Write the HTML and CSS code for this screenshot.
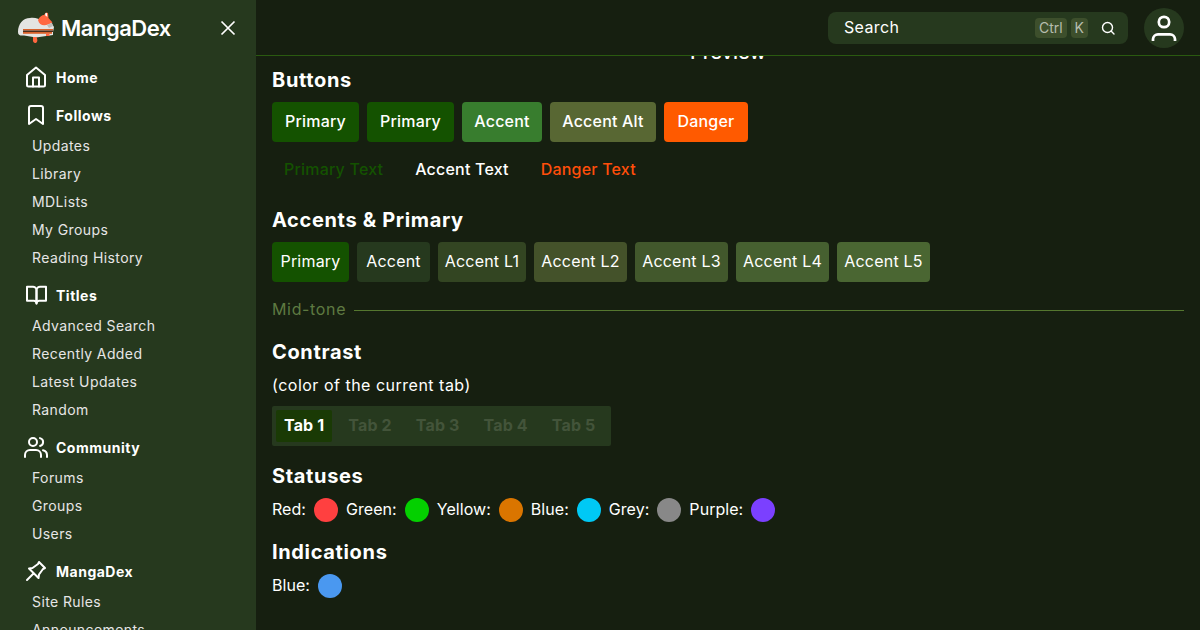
FILE: index.html
```html
<!DOCTYPE html>
<html lang="en">
<head>
<meta charset="utf-8">
<title>MangaDex</title>
<link rel="stylesheet" href="styles.css">
</head>
<body>
<aside class="sidebar">
  <div class="brand">
    <svg class="logo" width="36" height="32" viewBox="0 0 36 32">
      <path d="M0 20 C0 12 5 6 12 6 C17 5 21 7 25 9 L33 10 L36 15 L35 20 L35 23 L18 25.500 L6 23.500 C2 24 0 23 0 20 Z" fill="#e4e4e2"/>
      <path d="M20 8 C21 5 24 3 26 3 L28 0.500 L30 1 L30.500 6 L34.500 10.500 L30 12.500 C25 14.500 21 12.500 20 8 Z" fill="#ff6740"/>
      <path d="M27 1.500 L29 1 L29.300 5 L27.500 3.500 Z" fill="#fff"/>
      <path d="M29 13 L34 11 L35 14 L31 16 Z" fill="#bdbdb8"/>
      <path d="M5 17 H35 V18.500 H5 Z" fill="#d8622c"/>
      <path d="M5 18.500 H35 V20 H5 Z" fill="#4a2c1c"/>
      <path d="M5 20 H34 V21.800 H5 Z" fill="#d8622c"/>
      <path d="M28 21.500 H31.500 V24 H28 Z" fill="#ff6740"/>
      <path d="M15 25 L18.500 25 C19.500 27.500 20 29.500 18 31 C16 31.500 14.500 29.500 15 27.500 Z" fill="#ff6740"/>
    </svg>
    <span class="brand-name">MangaDex</span>
    <svg class="close" width="16" height="16" viewBox="0 0 16 16"><path d="M1.500 1.500 L14.500 14.500 M14.500 1.500 L1.500 14.500" stroke="#fff" stroke-width="1.700" fill="none"/></svg>
  </div>
  <nav class="nav">
    <section class="nav-group">
      <div class="nav-head">
        <svg class="nav-icon" width="24" height="24" viewBox="0 0 24 24" fill="none" stroke="#fff" stroke-width="2" stroke-linejoin="round" stroke-linecap="round"><path d="M3 10 L12 2.500 L21 10 V20 A1.500 1.500 0 0 1 19.500 21.500 H4.500 A1.500 1.500 0 0 1 3 20 Z"/><path d="M9 21.500 V12.500 H15 V21.500"/></svg>
        <span>Home</span>
      </div>
    </section>
    <section class="nav-group">
      <div class="nav-head">
        <svg class="nav-icon" width="24" height="24" viewBox="0 0 24 24" fill="none" stroke="#fff" stroke-width="2" stroke-linejoin="round"><path d="M19 21 L12 16 L5 21 V5 A2 2 0 0 1 7 3 H17 A2 2 0 0 1 19 5 Z"/></svg>
        <span>Follows</span>
      </div>
      <a class="nav-link">Updates</a>
      <a class="nav-link">Library</a>
      <a class="nav-link">MDLists</a>
      <a class="nav-link">My Groups</a>
      <a class="nav-link">Reading History</a>
    </section>
    <section class="nav-group">
      <div class="nav-head">
        <svg class="nav-icon" width="24" height="24" viewBox="0 0 24 24" fill="none" stroke="#fff" stroke-width="2" stroke-linejoin="round"><path d="M3 3.700 H8.500 A3.500 3.500 0 0 1 12.500 7 V20.500 A3 3 0 0 0 10 17.700 H3 Z"/><path d="M22 3.700 H16.500 A3.500 3.500 0 0 0 12.500 7 V20.500 A3 3 0 0 1 15 17.700 H22 Z"/></svg>
        <span>Titles</span>
      </div>
      <a class="nav-link">Advanced Search</a>
      <a class="nav-link">Recently Added</a>
      <a class="nav-link">Latest Updates</a>
      <a class="nav-link">Random</a>
    </section>
    <section class="nav-group">
      <div class="nav-head">
        <svg class="nav-icon" width="24" height="24" viewBox="0 0 24 24" fill="none" stroke="#fff" stroke-width="2" stroke-linecap="round"><path d="M1 22 V20 A5 5 0 0 1 6 15 H12 A5 5 0 0 1 17 20 V22"/><circle cx="9" cy="7" r="4"/><path d="M23 22 V20 A5 5 0 0 0 19 15.200"/><path d="M16 3.100 A4 4 0 0 1 16 10.900"/></svg>
        <span>Community</span>
      </div>
      <a class="nav-link">Forums</a>
      <a class="nav-link">Groups</a>
      <a class="nav-link">Users</a>
    </section>
    <section class="nav-group">
      <div class="nav-head">
        <svg class="nav-icon" width="24" height="24" viewBox="0 0 24 24" fill="none" stroke="#fff" stroke-width="2" stroke-linejoin="round" stroke-linecap="round"><path d="M15 3 L21 9 L19 10 L15 15.500 L14.500 19 L5 9.500 L8.500 9 L14 5 Z"/><path d="M9.500 14.500 L3 21"/></svg>
        <span>MangaDex</span>
      </div>
      <a class="nav-link">Site Rules</a>
      <a class="nav-link">Announcements</a>
    </section>
  </nav>
</aside>

<header class="topbar">
  <div class="search">
    <span class="search-label">Search</span>
    <span class="kbd">Ctrl</span>
    <span class="kbd">K</span>
    <svg class="search-icon" width="16" height="16" viewBox="0 0 16 16" fill="none" stroke="#fff" stroke-width="1.400" stroke-linecap="round"><circle cx="7.500" cy="7.500" r="5"/><path d="M11.300 11.300 L14 14"/></svg>
  </div>
  <div class="avatar">
    <svg width="28" height="30" viewBox="0 0 28 30" fill="none" stroke="#fff" stroke-width="2.700"><circle cx="14" cy="9" r="5.200"/><path d="M3 28 V26 A5 5 0 0 1 8 21.400 H20 A5 5 0 0 1 25 26 V28"/></svg>
  </div>
</header>

<main class="content">
  <div class="clipped-title"><span>Preview</span></div>
  <h2 class="heading">Buttons</h2>
  <div class="row button-row">
    <span class="btn btn-primary">Primary</span>
    <span class="btn btn-primary">Primary</span>
    <span class="btn btn-accent">Accent</span>
    <span class="btn btn-alt">Accent Alt</span>
    <span class="btn btn-danger">Danger</span>
  </div>
  <div class="row row-text">
    <span class="btn text-primary">Primary Text</span>
    <span class="btn text-accent">Accent Text</span>
    <span class="btn text-danger">Danger Text</span>
  </div>
  <h2 class="heading heading-accents">Accents &amp; Primary</h2>
  <div class="row swatches">
    <span class="swatch sw-primary">Primary</span>
    <span class="swatch sw-a0">Accent</span>
    <span class="swatch sw-a1">Accent L1</span>
    <span class="swatch sw-a2">Accent L2</span>
    <span class="swatch sw-a3">Accent L3</span>
    <span class="swatch sw-a4">Accent L4</span>
    <span class="swatch sw-a5">Accent L5</span>
  </div>
  <div class="midtone"><span>Mid-tone</span><i></i></div>
  <h2 class="heading heading-contrast">Contrast</h2>
  <p class="note">(color of the current tab)</p>
  <div class="tabs">
    <span class="tab tab-on">Tab 1</span>
    <span class="tab">Tab 2</span>
    <span class="tab">Tab 3</span>
    <span class="tab">Tab 4</span>
    <span class="tab">Tab 5</span>
  </div>
  <h2 class="heading heading-status">Statuses</h2>
  <div class="dots">
    <span>Red:</span><i class="dot d-red"></i>
    <span>Green:</span><i class="dot d-green"></i>
    <span>Yellow:</span><i class="dot d-yellow"></i>
    <span>Blue:</span><i class="dot d-blue"></i>
    <span>Grey:</span><i class="dot d-grey"></i>
    <span>Purple:</span><i class="dot d-purple"></i>
  </div>
  <h2 class="heading heading-ind">Indications</h2>
  <div class="dots">
    <span>Blue:</span><i class="dot d-ind"></i>
  </div>
</main>
</body>
</html>
```
FILE: styles.css
```css
* { box-sizing: border-box; }
html, body { height: 100%; }
body {
  margin: 0;
  height: 630px;
  overflow: hidden;
  display: grid;
  grid-template-columns: 256px 1fr;
  grid-template-rows: 56px 1fr;
  background: #161f10;
  color: #fff;
  font-family: "Inter", "Noto Sans", sans-serif;
  font-size: 16px;
}
.sidebar {
  grid-row: 1 / 3;
  background: #26391e;
  overflow: hidden;
  height: 630px;
}
.brand {
  display: flex;
  align-items: center;
  height: 56px;
  padding-left: 18px;
  padding-right: 20px;
}
.logo { flex: none; }
.brand-name {
  margin-left: 7px;
  font-size: 22px;
  font-weight: 600;
  letter-spacing: -0.5px;
  flex: 1;
}
.nav { padding: 7px 24px 0; }
.nav-group { margin-bottom: 10px; }
.nav-head {
  display: flex;
  align-items: center;
  gap: 8px;
  height: 28px;
  margin-bottom: 2px;
  font-size: 14px;
  font-weight: 700;
  letter-spacing: 0.5px;
  white-space: nowrap;
}
.nav-icon { flex: none; }
.nav-link {
  display: flex;
  align-items: center;
  height: 28px;
  padding-left: 8px;
  font-size: 14px;
  letter-spacing: 0.4px;
  color: #e6e6e6;
  white-space: nowrap;
}
.topbar {
  display: flex;
  align-items: center;
  justify-content: flex-end;
  gap: 16px;
  padding: 0 16px;
  border-bottom: 1px solid #2a5a10;
  background: #161f10;
}
.search {
  display: flex;
  align-items: center;
  gap: 4px;
  width: 300px;
  height: 32px;
  padding: 0 12px 0 16px;
  border-radius: 8px;
  background: #26391e;
}
.search-label { flex: 1; padding-bottom: 2px; font-size: 16px; letter-spacing: 0.35px; }
.kbd {
  padding: 0 4px;
  height: 20px;
  line-height: 20px;
  border-radius: 4px;
  background: #3d4f2c;
  color: #b6bdae;
  font-size: 14px;
}
.search-icon { margin-left: 8px; }
.avatar {
  display: flex;
  align-items: center;
  justify-content: center;
  width: 40px;
  height: 40px;
  border-radius: 50%;
  background: #26391e;
}
.content {
  position: relative;
  padding: 0 16px;
  overflow: hidden;
  min-width: 0;
}
.clipped-title {
  display: flex;
  justify-content: center;
  height: 12px;
  overflow: hidden;
  line-height: 0;
  font-size: 20px;
  font-weight: 500;
}
.clipped-title span { margin-top: -4px; }
.heading { margin: 0; font-size: 20px; line-height: 24px; font-weight: 700; letter-spacing: 0.65px; }
.row { display: flex; gap: 8px; }
.heading + .row { margin-top: 10px; }
.button-row {
  display: grid;
  grid-template-columns: 87px 87px 80px 106px 84px;
  width: max-content;
}
.btn {
  display: flex;
  align-items: center;
  justify-content: center;
  height: 40px;
  padding: 0 12px 2px;
  border-radius: 4px;
  font-size: 16px;
  font-weight: 500;
  letter-spacing: 0.2px;
  white-space: nowrap;
}
.btn-primary { background: #145200; }
.btn-accent { background: #387d2e; }
.btn-alt { background: #586733; }
.btn-danger { background: #ff5a00; }
.row-text { margin-top: 8px; }
.text-primary { color: #145200; }
.text-accent { color: #fff; }
.text-danger { color: #ff4e0a; }
.heading-accents { margin-top: 18px; }
.swatches {
  display: grid;
  grid-template-columns: 77px 73px 88px repeat(4, 93px);
  width: max-content;
}
.swatch {
  display: flex;
  align-items: center;
  justify-content: center;
  height: 40px;
  padding-bottom: 2px;
  border-radius: 4px;
  font-size: 16px;
  letter-spacing: 0.2px;
  white-space: nowrap;
}
.sw-primary { background: #145200; }
.sw-a0 { background: #26391e; }
.sw-a1 { background: #334522; }
.sw-a2 { background: #44522a; }
.sw-a3 { background: #42582c; }
.sw-a4 { background: #466030; }
.sw-a5 { background: #4a6632; }
.midtone {
  display: flex;
  align-items: center;
  gap: 8px;
  height: 24px;
  margin-top: 16px;
  color: #5e7a41;
  font-size: 16px;
  letter-spacing: 0.65px;
}
.midtone span { padding-bottom: 2px; }
.midtone i { flex: 1; height: 1px; background: #55772f; }
.heading-contrast { margin-top: 18px; }
.note { margin: 9px 0 0; line-height: 24px; font-size: 16px; letter-spacing: 0.5px; }
.tabs {
  display: flex;
  align-items: stretch;
  width: 339px;
  height: 40px;
  margin-top: 9px;
  padding: 4px;
  border-radius: 2px;
  background: #26391e;
}
.tab {
  display: flex;
  align-items: center;
  padding: 0 8px 2px;
  margin-right: 8px;
  border-radius: 2px;
  font-weight: 700;
  font-size: 16px;
  letter-spacing: 0.15px;
  color: #43543a;
  white-space: nowrap;
}
.tab-on { background: #1a3a05; color: #fff; }
.heading-status { margin-top: 18px; }
.dots {
  display: flex;
  align-items: center;
  margin-top: 10px;
  font-size: 16px;
  letter-spacing: 0.05px;
}
.dots span { padding-bottom: 2px; }
.dot {
  width: 24px;
  height: 24px;
  margin-left: 8px;
  margin-right: 8px;
  border-radius: 50%;
}
.d-red { background: #ff4040; }
.d-green { background: #04d000; }
.d-yellow { background: #da7500; }
.d-blue { background: #00c9f5; }
.d-grey { background: #888; }
.d-purple { background: #7b40ff; }
.d-ind { background: #4a98f0; }
.heading-ind { margin-top: 18px; }
```
